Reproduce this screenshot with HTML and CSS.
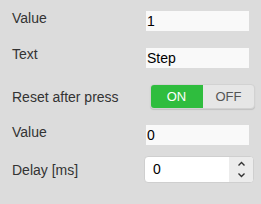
FILE: index.html
```html
<!DOCTYPE html>
<html>
<head>
<meta charset="utf-8">
<link rel="stylesheet" href="styles.css">
</head>
<body>
<div class="form">
  <div class="row r1">
    <div class="label">Value</div>
    <input class="field" type="text" value="1">
  </div>
  <div class="row r2">
    <div class="label">Text</div>
    <input class="field" type="text" value="Step">
  </div>
  <div class="row r3 center">
    <div class="label">Reset after press</div>
    <div class="toggle">
      <span class="opt on">ON</span>
      <span class="opt off">OFF</span>
    </div>
  </div>
  <div class="row r4">
    <div class="label">Value</div>
    <input class="field" type="text" value="0">
  </div>
  <div class="row r5 center">
    <div class="label">Delay [ms]</div>
    <div class="number">
      <span class="num-val">0</span>
      <span class="spin">
        <svg width="9" height="6" viewBox="0 0 9 6"><path d="M1.5 4.5 L4.5 1.5 L7.5 4.5" fill="none" stroke="#333" stroke-width="1.4"/></svg>
        <svg width="9" height="6" viewBox="0 0 9 6"><path d="M1.5 1.5 L4.5 4.5 L7.5 1.5" fill="none" stroke="#333" stroke-width="1.4"/></svg>
      </span>
    </div>
  </div>
</div>
</body>
</html>
```
FILE: styles.css
```css
html, body {
  margin: 0;
  padding: 0;
  background: #dcdcdc;
  width: 261px;
  height: 204px;
  overflow: hidden;
}
body {
  font-family: "Liberation Sans", Arial, sans-serif;
  font-size: 14px;
  color: #333;
}
.form {
  padding: 10px 0 0 12px;
  display: flex;
  flex-direction: column;
}
.row {
  display: flex;
  align-items: flex-start;
}
.row.center {
  align-items: center;
}
.label {
  width: 134px;
  line-height: 16px;
  height: 16px;
  white-space: nowrap;
}
.field {
  box-sizing: border-box;
  width: 103px;
  height: 20px;
  border: none;
  outline: none;
  margin: 1px 0 0 0;
  padding: 0 1px;
  background: #f9f9f9;
  font-family: "Liberation Sans", Arial, sans-serif;
  font-size: 14px;
  line-height: 20px;
  color: #000;
}
.r2 { margin-top: 15px; }
.r2 .field { margin-top: 2px; }
.r3 { margin-top: 16px; }
.r4 { margin-top: 15px; }
.r5 { margin-top: 11px; }
.toggle {
  margin-left: 4px;
  display: flex;
  width: 105px;
  height: 25px;
  box-sizing: border-box;
  border-radius: 4px;
  background: #e6e6e6;
  border: 1px solid #d2d2d2;
  box-shadow: 0 1px 1px rgba(0,0,0,0.12);
  overflow: hidden;
  font-size: 13px;
}
.opt {
  display: flex;
  align-items: center;
  justify-content: center;
  height: 100%;
}
.on {
  width: 53px;
  margin: -1px 0 -1px -1px;
  height: 25px;
  background: #2fbd3e;
  color: #fff;
  border-radius: 4px 0 0 4px;
}
.off {
  flex: 1;
  color: #555;
}
.number {
  margin-left: -2px;
  box-sizing: border-box;
  width: 110px;
  height: 27px;
  border: 1px solid #cfcfcf;
  border-radius: 4px;
  background: #fff;
  display: flex;
  overflow: hidden;
}
.num-val {
  flex: 1;
  padding-left: 8px;
  line-height: 25px;
  color: #000;
}
.spin {
  width: 24px;
  background: #ececec;
  display: flex;
  flex-direction: column;
  align-items: center;
  justify-content: space-between;
  padding: 4px 0 4px;
}
.spin svg { display: block; }
```
